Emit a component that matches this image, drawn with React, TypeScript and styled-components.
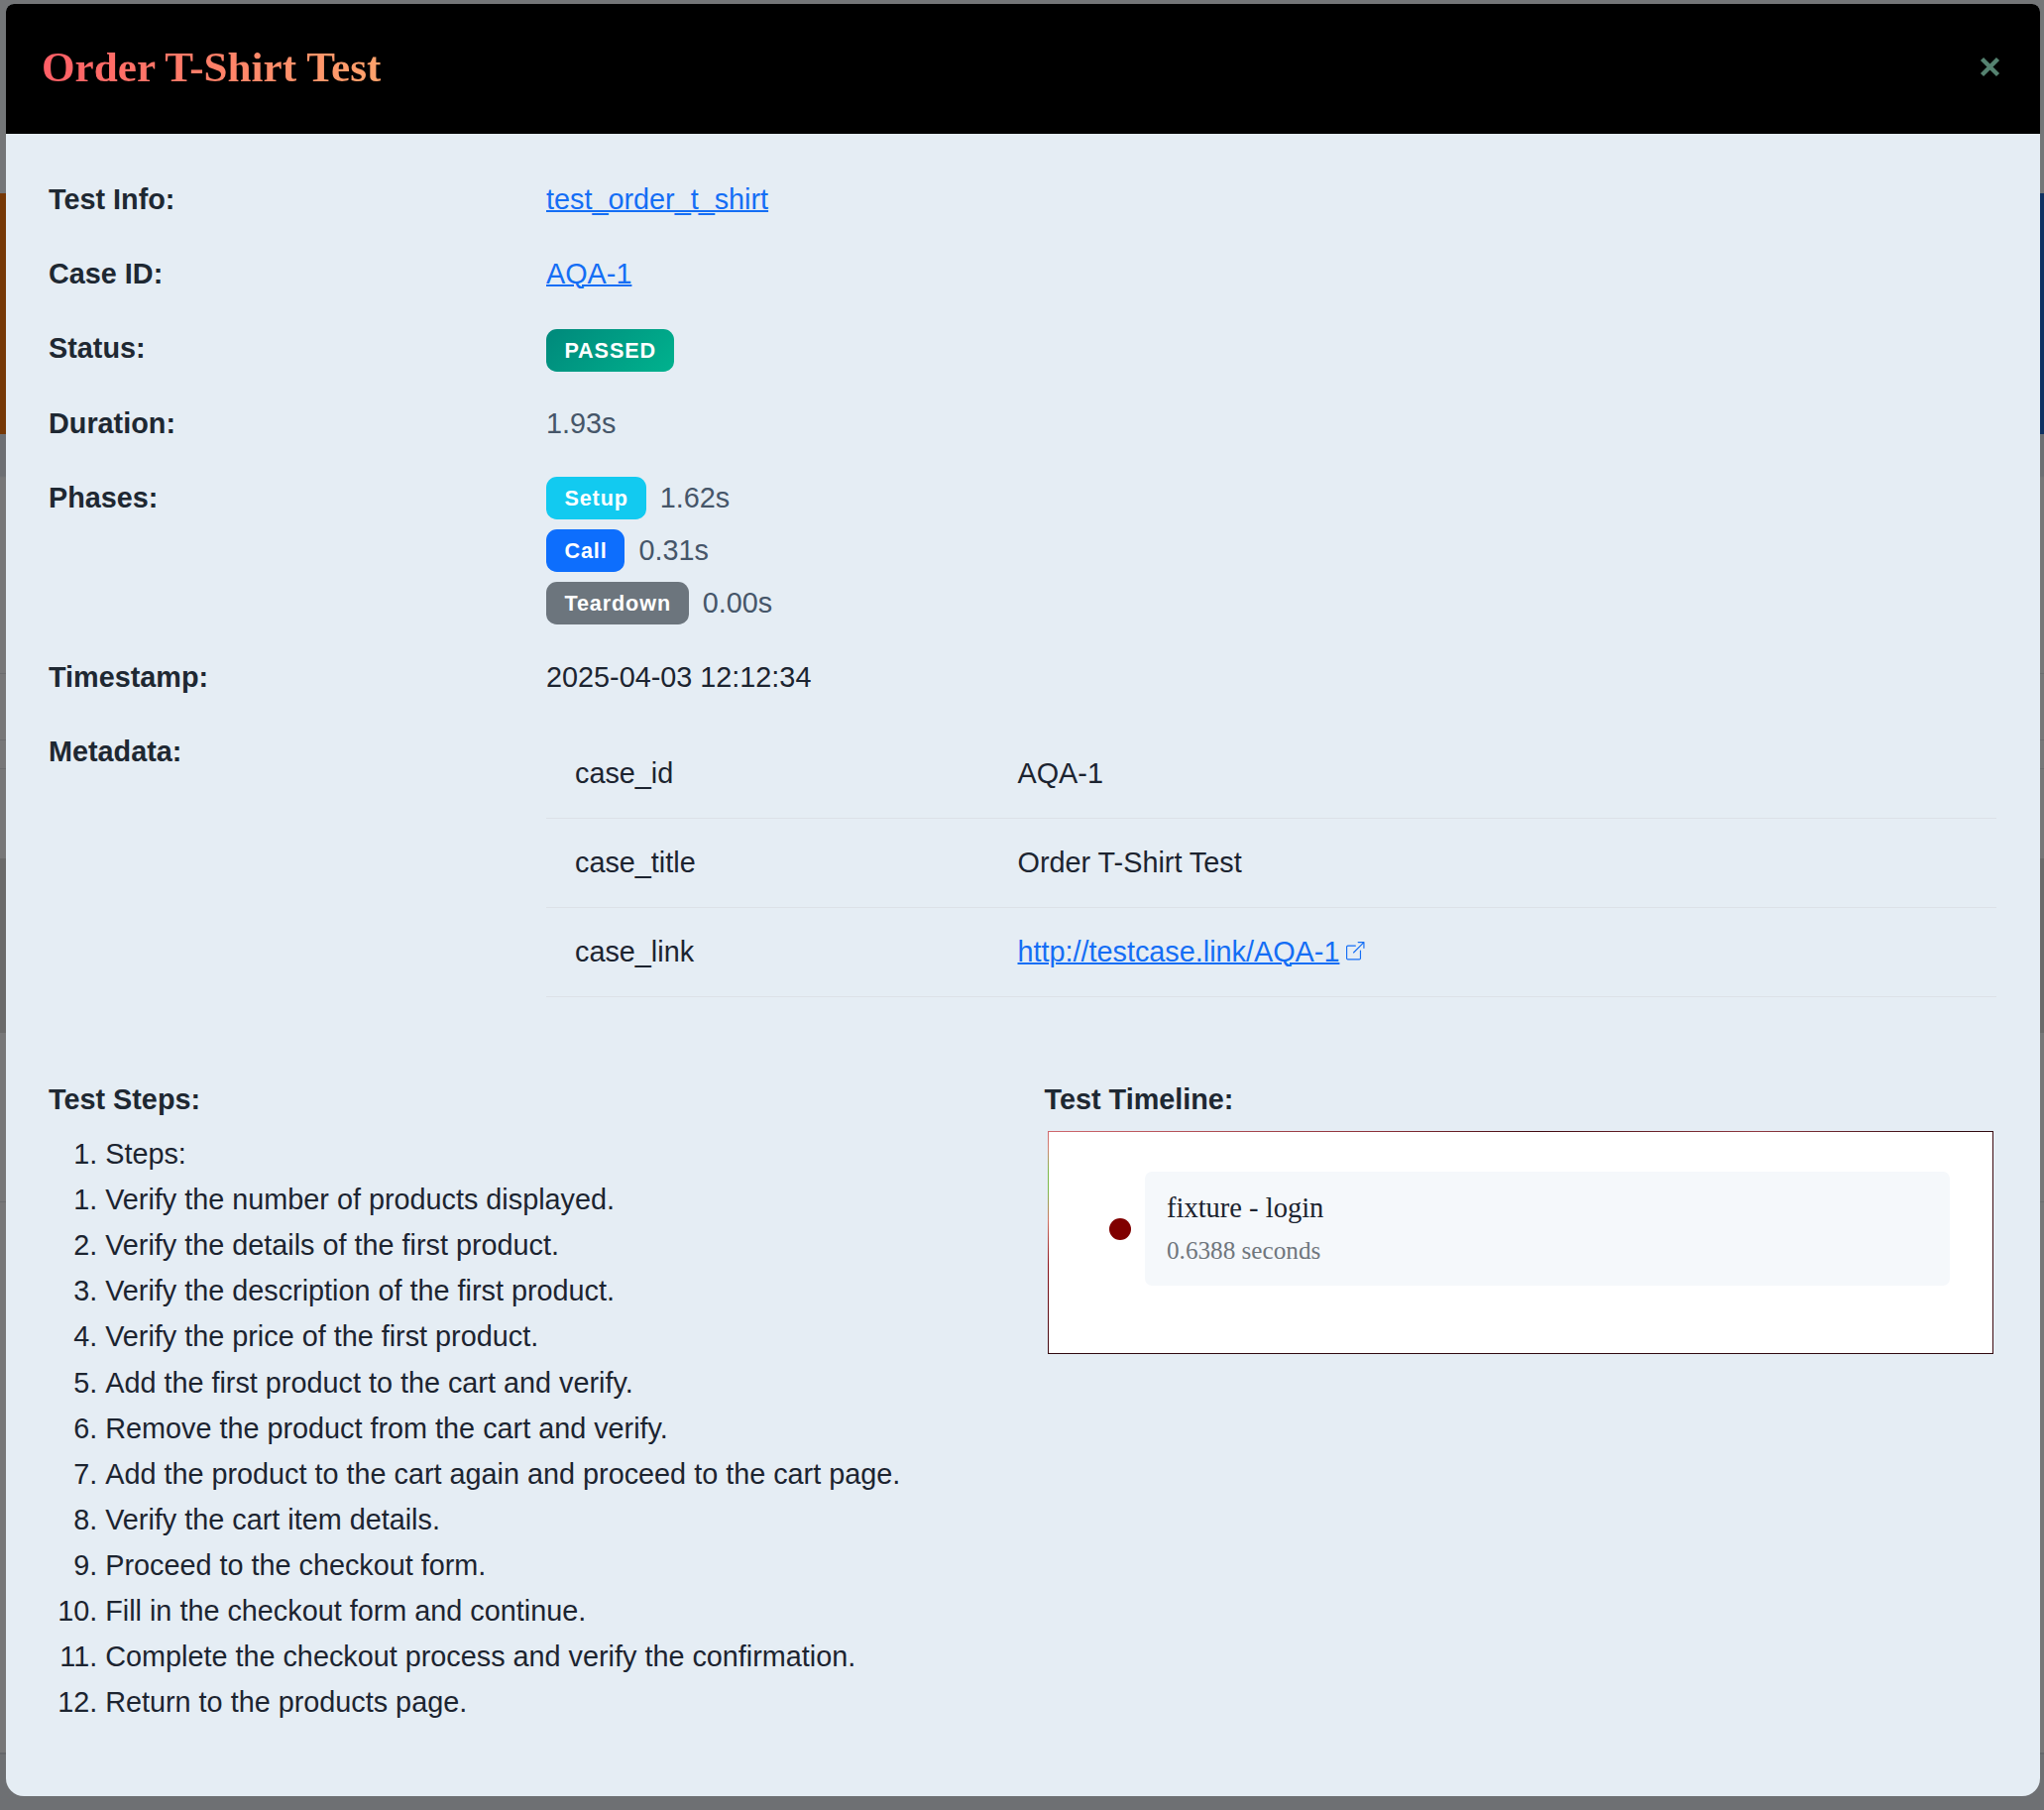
import React from 'react';
import styled, { createGlobalStyle } from 'styled-components';

const GlobalStyle = createGlobalStyle`
  * { box-sizing: border-box; }
  body {
    margin: 0;
    background: #747678;
    font-family: Arial, "Liberation Sans", sans-serif;
    font-size: 28.8px;
    line-height: 43.2px;
    color: #1c2430;
  }
`;

const Backdrop = styled.div`
  width: 2062px;
  height: 1826px;
  padding: 4px 4px 0 6px;
  overflow: hidden;
  background:
    linear-gradient(#763806, #763806) 0 195px / 6px 243px no-repeat,
    linear-gradient(#0f3162, #0f3162) 100% 195px / 4px 243px no-repeat,
    linear-gradient(#6b6c6e, #6b6c6e) 0 679px / 100% 1px no-repeat,
    linear-gradient(#6b6c6e, #6b6c6e) 0 746px / 100% 1px no-repeat,
    linear-gradient(#6b6c6e, #6b6c6e) 0 775px / 100% 1px no-repeat,
    linear-gradient(#6a6a6a, #6a6a6a) 0 866px / 100% 176px no-repeat,
    linear-gradient(#6b6c6e, #6b6c6e) 0 1212px / 100% 1px no-repeat,
    linear-gradient(#65676a, #65676a) 0 1768px / 100% 2px no-repeat,
    linear-gradient(#747678 0 438px, #6d6f73 439px 480px, #777778 482px 1768px, #6e7073 1770px);
`;

const Dialog = styled.section`
  height: 1808px;
  border-radius: 8px 8px 18px 18px;
  overflow: hidden;
  background: #e5edf4;
`;

const Header = styled.header`
  display: flex;
  align-items: center;
  justify-content: space-between;
  height: 131px;
  padding: 0 40px 4px 36px;
  background: #000;
`;

const Title = styled.h1`
  margin: 0;
  font-family: "Times New Roman", "Liberation Serif", serif;
  font-size: 43.2px;
  line-height: 65px;
  font-weight: 700;
  color: transparent;
  background: linear-gradient(100deg, #ff5d66, #ffa36b);
  background-clip: text;
  -webkit-background-clip: text;
`;

const CloseButton = styled.button`
  display: flex;
  padding: 0;
  border: 0;
  background: none;
  color: #558270;
`;

const Body = styled.div`
  padding: 45px 44px 0 43px;
`;

const Field = styled.div<{ $height?: number }>`
  display: grid;
  grid-template-columns: 502px 1fr;
  height: ${(p) => p.$height ?? 75.2}px;
`;

const Label = styled.div`
  font-weight: 700;
  color: #1e2832;
`;

const Link = styled.a`
  color: #146ef5;
  text-decoration: underline;
  text-decoration-thickness: 2px;
`;

const Muted = styled.span`
  color: #465669;
`;

const Badge = styled.span<{ $bg: string }>`
  display: flex;
  align-items: center;
  height: 43px;
  padding: 0 17.8px 0 18.4px;
  border-radius: 10.8px;
  background: ${(p) => p.$bg};
  color: #fff;
  font-size: 21.6px;
  font-weight: 700;
  letter-spacing: 0.9px;
`;

const BadgeLine = styled.div<{ $drop?: number }>`
  display: flex;
  align-items: center;
  gap: 14px;
  height: 53.3px;
  margin-top: ${(p) => p.$drop ?? 0}px;
  padding-bottom: 10.3px;
`;

const MetaTable = styled.div`
  height: 320px;
`;

const MetaRow = styled.div`
  display: grid;
  grid-template-columns: 446.5px 1fr;
  align-items: center;
  height: 90.2px;
  padding-left: 29px;
  border-bottom: 1px solid #dce1e7;

  &:first-child { height: 88.8px; }
`;

const LinkWithIcon = styled.div`
  display: flex;
  align-items: center;
  gap: 7px;
  color: #146ef5;

  svg { margin-bottom: 2px; }
`;

const Columns = styled.div`
  display: grid;
  grid-template-columns: 1004.5px 1fr;
`;

const StepList = styled.ol`
  margin: 9.8px 0 0;
  padding: 0 0 0 57.2px;
  line-height: 46.08px;
`;

const Timeline = styled.div`
  width: 954px;
  height: 225px;
  margin: 10px 0 0 3.5px;
  padding: 40px 43px 0 61px;
  border: 1px solid transparent;
  background:
    linear-gradient(#fff, #fff) padding-box,
    linear-gradient(#300a10, #300a10) 0 100% / 100% 1px no-repeat border-box,
    linear-gradient(#3c0a10, #3c0a10) 100% 0 / 1px 100% no-repeat border-box,
    linear-gradient(90deg, #d0686e, #8b3038 35%, #400a10 52%, #903840 75%, #300a10 95%) 0 0 / 100% 1px no-repeat border-box,
    linear-gradient(#d0686e, #d08070 8%, #7cb848 18%, #7cb848 27%, #d07060 40%, #8b1018 60%, #3c0a10) 0 0 / 1px 100% no-repeat border-box;
`;

const TimelineItem = styled.div`
  display: flex;
  align-items: center;
  gap: 14px;
`;

const Dot = styled.span`
  width: 22px;
  height: 22px;
  border-radius: 50%;
  background: #800000;
`;

const Event = styled.div`
  flex: 1;
  height: 115px;
  padding: 15px 22px;
  border-radius: 7px;
  background: #f5f8fb;
  font-family: "Times New Roman", "Liberation Serif", serif;
`;

const EventName = styled.div`
  font-size: 28.5px;
`;

const EventTime = styled.div`
  font-size: 25.2px;
  line-height: 42px;
  color: #6f767d;
`;

const phases = [
  { name: 'Setup', time: '1.62s', bg: '#12caf0' },
  { name: 'Call', time: '0.31s', bg: '#0d6efd' },
  { name: 'Teardown', time: '0.00s', bg: '#6c757d' },
];

const steps = [
  'Verify the number of products displayed.',
  'Verify the details of the first product.',
  'Verify the description of the first product.',
  'Verify the price of the first product.',
  'Add the first product to the cart and verify.',
  'Remove the product from the cart and verify.',
  'Add the product to the cart again and proceed to the cart page.',
  'Verify the cart item details.',
  'Proceed to the checkout form.',
  'Fill in the checkout form and continue.',
  'Complete the checkout process and verify the confirmation.',
  'Return to the products page.',
];

export default function App() {
  return (
    <>
      <GlobalStyle />
      <Backdrop>
        <Dialog>
          <Header>
            <Title>Order T-Shirt Test</Title>
            <CloseButton aria-label="Close">
              <svg width="21" height="21" viewBox="0 0 21 21" stroke="currentColor" strokeWidth="4.4">
                <path d="M2.5 2.5l16 16M18.5 2.5L2.5 18.5" />
              </svg>
            </CloseButton>
          </Header>
          <Body>
            <Field>
              <Label>Test Info:</Label>
              <div><Link>test_order_t_shirt</Link></div>
            </Field>
            <Field>
              <Label>Case ID:</Label>
              <div><Link>AQA-1</Link></div>
            </Field>
            <Field>
              <Label>Status:</Label>
              <BadgeLine $drop={1.6}>
                <Badge $bg="linear-gradient(135deg, #00897b, #00b28e)">PASSED</Badge>
              </BadgeLine>
            </Field>
            <Field>
              <Label>Duration:</Label>
              <Muted>1.93s</Muted>
            </Field>
            <Field $height={181.2}>
              <Label>Phases:</Label>
              <div>
                {phases.map((p) => (
                  <BadgeLine key={p.name}>
                    <Badge $bg={p.bg}>{p.name}</Badge>
                    <Muted>{p.time}</Muted>
                  </BadgeLine>
                ))}
              </div>
            </Field>
            <Field>
              <Label>Timestamp:</Label>
              <div>2025-04-03 12:12:34</div>
            </Field>
            <Field $height={351}>
              <Label>Metadata:</Label>
              <MetaTable>
                <MetaRow><span>case_id</span><span>AQA-1</span></MetaRow>
                <MetaRow><span>case_title</span><span>Order T-Shirt Test</span></MetaRow>
                <MetaRow>
                  <span>case_link</span>
                  <LinkWithIcon>
                    <Link>http://testcase.link/AQA-1</Link>
                    <svg width="18.5" height="18.5" viewBox="0 0 16 16" fill="currentColor">
                      <path fillRule="evenodd" d="M8.636 3.5a.5.5 0 0 0-.5-.5H1.5A1.5 1.5 0 0 0 0 4.5v10A1.5 1.5 0 0 0 1.5 16h10a1.5 1.5 0 0 0 1.5-1.5V7.864a.5.5 0 0 0-1 0V14.5a.5.5 0 0 1-.5.5h-10a.5.5 0 0 1-.5-.5v-10a.5.5 0 0 1 .5-.5h6.636a.5.5 0 0 0 .5-.5" />
                      <path fillRule="evenodd" d="M16 .5a.5.5 0 0 0-.5-.5h-5a.5.5 0 0 0 0 1h3.793L6.146 9.146a.5.5 0 1 0 .708.708L15 1.707V5.5a.5.5 0 0 0 1 0z" />
                    </svg>
                  </LinkWithIcon>
                </MetaRow>
              </MetaTable>
            </Field>
            <Columns>
              <div>
                <Label>Test Steps:</Label>
                <StepList>
                  <li>Steps:</li>
                  {steps.map((s, i) => (
                    <li key={s} value={i + 1}>{s}</li>
                  ))}
                </StepList>
              </div>
              <div>
                <Label>Test Timeline:</Label>
                <Timeline>
                  <TimelineItem>
                    <Dot />
                    <Event>
                      <EventName>fixture - login</EventName>
                      <EventTime>0.6388 seconds</EventTime>
                    </Event>
                  </TimelineItem>
                </Timeline>
              </div>
            </Columns>
          </Body>
        </Dialog>
      </Backdrop>
    </>
  );
}
